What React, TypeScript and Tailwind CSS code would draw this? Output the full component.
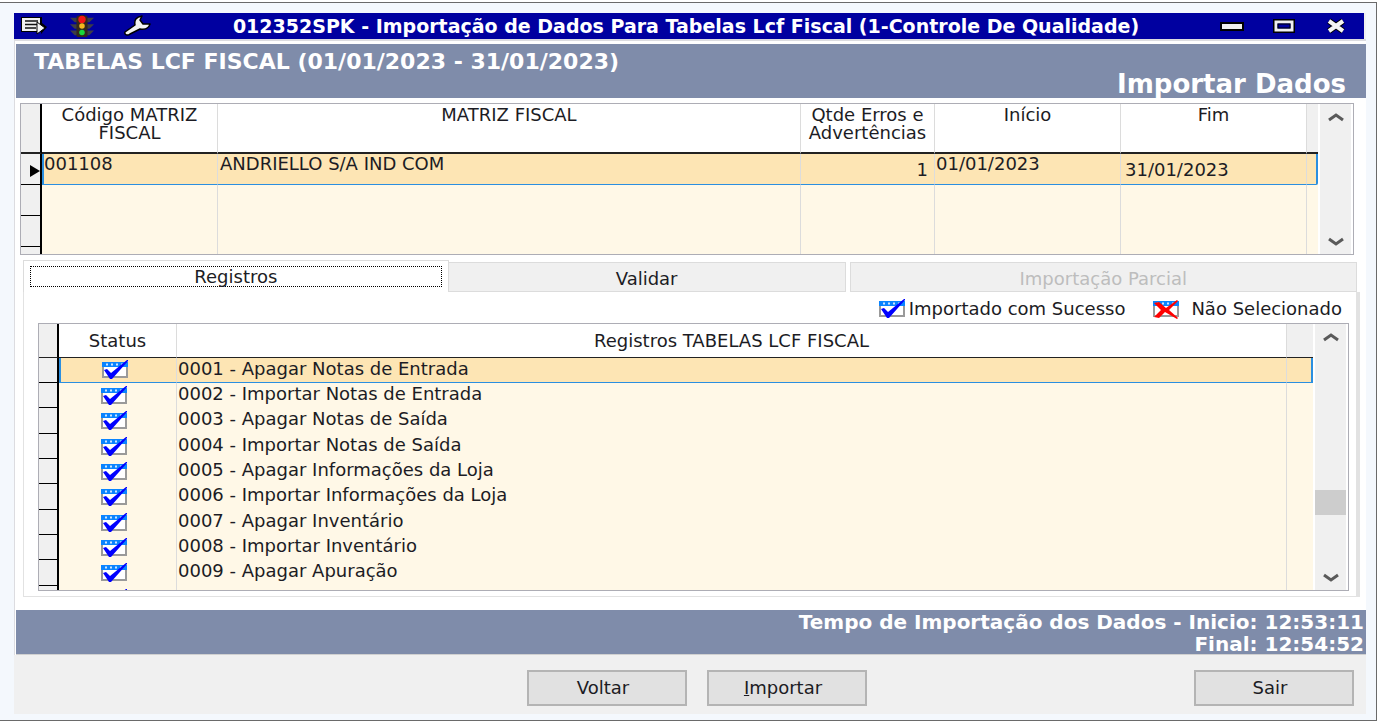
import { ReactNode, useState } from "react";

const registros = [
  "0001 - Apagar Notas de Entrada",
  "0002 - Importar Notas de Entrada",
  "0003 - Apagar Notas de Saída",
  "0004 - Importar Notas de Saída",
  "0005 - Apagar Informações da Loja",
  "0006 - Importar Informações da Loja",
  "0007 - Apagar Inventário",
  "0008 - Importar Inventário",
  "0009 - Apagar Apuração",
  "",
];

const CalendarBox = ({ children }: { children: ReactNode }) => (
  <svg className="block h-5 w-[26px] shrink-0" viewBox="0 0 26 20">
    <rect x="1" y="3" width="24" height="14" fill="#fff" stroke="#9a9a9a" strokeWidth="2" />
    <rect x="0" y="2" width="26" height="5" fill="#0a84ff" />
    <path d="M4 4.5h18" stroke="#cfe6ff" strokeWidth="2" strokeDasharray="2 3" />
    {children}
  </svg>
);

const CheckIcon = () => (
  <CalendarBox>
    <path d="M2 10l3-1 4 4L25 0h1v1L10 19H8z" fill="#0000ff" />
  </CalendarBox>
);

const CrossIcon = () => (
  <CalendarBox>
    <path d="M1 4l5-1 7 6 11-8 1 1-9 9 9 8-1 1-12-7-6 6-5-1 7-7z" fill="#ff0000" />
  </CalendarBox>
);

const MenuIcon = () => (
  <svg className="block h-7 w-7" viewBox="0 0 28 28">
    <path d="M1 5h21v6l5 4-6 7v-2H1z" fill="#000" />
    <path d="M2 6h18v13H2z" fill="#f0f0f0" />
    <path d="M5 9h13M5 12.5h13M5 16h11" stroke="#111" strokeWidth="1.5" />
    <path d="M17 10l8 6-8 6z" fill="#f5f5f5" stroke="#000" />
  </svg>
);

const TrafficIcon = () => (
  <svg className="block h-6 w-7" viewBox="0 0 28 26">
    <path d="M1 4h26l-5 5H6zM1 11h26l-5 5H6zM1 18h26l-5 5H6z" fill="#3d3d46" />
    <rect x="8" y="2" width="12" height="23" rx="2" fill="#33281c" />
    <rect x="11" y="1" width="6" height="3" fill="#222" />
    <circle cx="14" cy="6" r="4" fill="#f01414" />
    <circle cx="14" cy="13" r="3" fill="#f5b81e" />
    <circle cx="14" cy="20" r="3" fill="#18d83c" />
  </svg>
);

const WrenchIcon = () => (
  <svg className="block h-7 w-7" viewBox="0 0 28 28">
    <path
      d="M1 20L11 13C10 8 12 5 18 4L16 8L19 12L26 12C25 16 21 18 16 17L6 22C4 24 0 23 1 20Z"
      fill="#f2f2f2"
      stroke="#000"
      strokeWidth="1.5"
      strokeLinejoin="round"
    />
  </svg>
);

const Chevron = ({ down }: { down?: boolean }) => (
  <svg className="block h-[10px] w-4" viewBox="0 0 16 10">
    <path d={down ? "M1 2l7 5 7-5" : "M1 8l7-5 7 5"} fill="none" stroke="#5a5a5a" strokeWidth="3" />
  </svg>
);

const ScrollBar = ({ thumb }: { thumb?: boolean }) => (
  <div className="flex w-[35px] shrink-0 flex-col justify-between border-x-2 border-white bg-[#f0f0f0]">
    <button aria-label="Rolar para cima" className="flex h-[26px] items-center justify-center">
      <Chevron />
    </button>
    {thumb && (
      <div className="flex flex-1 flex-col justify-end pb-[51px]">
        <div className="h-[25px] bg-[#cdcdcd]" />
      </div>
    )}
    <button aria-label="Rolar para baixo" className="flex h-6 items-center justify-center">
      <Chevron down />
    </button>
  </div>
);

const App = () => {
  const [tab, setTab] = useState("registros");

  return (
    <div className="bg-white pt-[2px] pr-1 font-['DejaVu_Sans',sans-serif] text-[18px] leading-[18px] text-[#1c1c24]">
      <div className="border border-l-0 border-[#6a6a6a] bg-[#f4f8fd] pt-[10px] pr-[10px] pb-[6px] pl-[14px]">
        <div className="bg-[#f0f0f0]">
          {/* Title bar */}
          <header className="mr-[2px] flex h-[26px] items-center bg-[#0000a0] pr-4 pl-[6px] text-white">
            <button aria-label="Menu">
              <MenuIcon />
            </button>
            <button aria-label="Semáforo" className="ml-5">
              <TrafficIcon />
            </button>
            <button aria-label="Ferramentas" className="ml-7">
              <WrenchIcon />
            </button>
            <h1 className="flex-1 text-center text-[19px] font-bold whitespace-nowrap">
              012352SPK - Importação de Dados Para Tabelas Lcf Fiscal (1-Controle De Qualidade)
            </h1>
            <div className="flex items-center gap-7">
              <button aria-label="Minimizar">
                <svg className="block h-4 w-6" viewBox="0 0 24 16">
                  <rect x="1" y="5" width="22" height="7" fill="#f0f0f0" stroke="#000" strokeWidth="2" />
                </svg>
              </button>
              <button aria-label="Maximizar">
                <svg className="block h-4 w-6" viewBox="0 0 24 16">
                  <rect x="1" y="1" width="22" height="14" fill="#000" />
                  <rect x="4" y="4" width="16" height="8" fill="#0000a0" stroke="#f0f0f0" strokeWidth="3" />
                  <rect x="6" y="6" width="12" height="4" fill="none" stroke="#000" />
                </svg>
              </button>
              <button aria-label="Fechar">
                <svg className="block h-4 w-6" viewBox="0 0 24 16">
                  <path d="M5 3l14 10M19 3L5 13" stroke="#000" strokeWidth="6" />
                  <path d="M5 3l14 10M19 3L5 13" stroke="#f5f5f5" strokeWidth="4" />
                </svg>
              </button>
            </div>
          </header>

          <main className="border-t-2 border-l border-[#dcdce0] bg-white pt-[3px] pl-px">
            <div className="h-[54px] bg-[#7f8caa] pr-5 pl-[18px] font-bold text-white">
              <h2 className="pt-2 text-[22px] leading-5">TABELAS LCF FISCAL (01/01/2023 - 31/01/2023)</h2>
              <p className="text-right text-[26px] leading-6">Importar Dados</p>
            </div>

            {/* Matriz grid */}
            <div className="mt-[5px] mr-3 ml-1 flex h-[152px] overflow-hidden border border-[#adadb5]">
              <div className="flex-1 bg-[#fff8e7]">
                <table className="w-full table-fixed border-separate border-spacing-0">
                  <colgroup>
                    <col className="w-[21px]" />
                    <col className="w-44" />
                    <col />
                    <col className="w-[134px]" />
                    <col className="w-[186px]" />
                    <col className="w-[186px]" />
                    <col className="w-[11px]" />
                  </colgroup>
                  <thead>
                    <tr className="h-[50px] bg-white *:border-r *:border-b-2 *:border-r-[#dcdcdc] *:border-b-[#222] *:p-0 *:pt-[2px] *:align-top *:font-normal">
                      <td className="border-r-2! border-r-black! bg-[#f0f0f0]" />
                      <th className="px-2!">Código MATRIZ FISCAL</th>
                      <th>MATRIZ FISCAL</th>
                      <th>Qtde Erros e Advertências</th>
                      <th>Início</th>
                      <th>Fim</th>
                      <td className="border-r-0! bg-[#f0f0f0]" />
                    </tr>
                  </thead>
                  <tbody>
                    <tr className="h-[31px] bg-[#fde5b4] *:border-r *:border-b *:border-r-[#dcdcdc] *:border-b-[#2b8fe0] *:p-0 *:pt-px *:align-top">
                      <td className="border-r-2! border-r-black! border-b-black! bg-[#f0f0f0] align-bottom!">
                        <svg className="mb-[7px] ml-2 block h-3 w-[11px]" viewBox="0 0 11 12">
                          <path d="M1 0l10 6-10 6z" fill="#000" />
                        </svg>
                      </td>
                      <td className="border-l-2 border-l-[#2b8fe0]">001108</td>
                      <td className="pl-[2px]!">ANDRIELLO S/A IND COM</td>
                      <td className="pt-[7px]! pr-[6px]! text-right">1</td>
                      <td className="pl-px!">01/01/2023</td>
                      <td className="pt-[7px]! pl-1!">31/01/2023</td>
                      <td className="rounded-br-xs border-r-2! border-r-[#2b8fe0]!" />
                    </tr>
                    {[1, 2, 3].map((row) => (
                      <tr key={row} className="h-[31px] *:border-r *:border-[#dcdcdc]">
                        <td className="border-r-2! border-b border-black! bg-[#f0f0f0]" />
                        <td />
                        <td />
                        <td />
                        <td />
                        <td />
                        <td className="border-r-0!" />
                      </tr>
                    ))}
                  </tbody>
                </table>
              </div>
              <ScrollBar />
            </div>

            {/* Tabs */}
            <div role="tablist" className="mt-[5px] mr-[9px] ml-[7px] flex h-8 items-end">
              <button
                role="tab"
                aria-selected={tab === "registros"}
                onClick={() => setTab("registros")}
                className="h-8 flex-425 border border-b-0 border-[#dcdcdc]"
              >
                <span className="mx-[6px] mb-px block h-[21px] border border-dotted border-black leading-5">
                  Registros
                </span>
              </button>
              <button
                role="tab"
                aria-selected={tab === "validar"}
                onClick={() => setTab("validar")}
                className="mr-1 h-[30px] flex-397 border border-l-0 border-[#dcdcdc] bg-[#f0f0f0] pt-1"
              >
                Validar
              </button>
              <button
                role="tab"
                aria-selected={false}
                disabled
                className="h-[30px] flex-507 border border-[#dcdcdc] bg-[#f0f0f0] pt-1 text-[#bdbdbd]"
              >
                Importação Parcial
              </button>
            </div>

            <div className="mr-[6px] ml-[7px] border border-t-0 border-r-4 border-[#e2e2e2] pr-[7px] pb-[5px] pl-[14px]">
              <div className="flex h-[31px] items-center justify-end pt-[2px] pr-[7px]">
                <CheckIcon />
                <span className="ml-1">Importado com Sucesso</span>
                <span className="ml-7 flex">
                  <CrossIcon />
                </span>
                <span className="ml-3">Não Selecionado</span>
              </div>

              {/* Registros grid */}
              <div className="flex h-[268px] overflow-hidden border border-[#adadb5]">
                <div className="flex-1 bg-[#fff8e7]">
                  <table className="w-full table-fixed border-separate border-spacing-0">
                    <colgroup>
                      <col className="w-5" />
                      <col className="w-[118px]" />
                      <col />
                      <col className="w-[26px]" />
                    </colgroup>
                    <thead>
                      <tr className="h-[34px] bg-white *:border-r *:border-b *:border-r-[#dcdcdc] *:border-b-[#222] *:p-0 *:font-normal">
                        <td className="border-r-2! border-r-black! bg-[#f0f0f0]" />
                        <th>Status</th>
                        <th>Registros TABELAS LCF FISCAL</th>
                        <td className="border-r-0! bg-[#f0f0f0]" />
                      </tr>
                    </thead>
                    <tbody>
                      {registros.map((registro, i) => {
                        const selected = i === 0;
                        const cell = selected ? "border-b border-b-[#2b8fe0] bg-[#fde5b4] p-0" : "p-0";
                        return (
                          <tr key={i} className={i % 3 === 2 ? "h-[26px]" : "h-[25px]"}>
                            <td className="border-r-2 border-b border-black bg-[#f0f0f0] p-0" />
                            <td
                              className={`${cell} border-r border-r-[#dcdcdc] ${selected ? "border-l-2 border-l-[#2b8fe0]" : ""}`}
                            >
                              <span className="flex h-5 justify-center pr-2">
                                <CheckIcon />
                              </span>
                            </td>
                            <td className={`${cell} border-r border-r-[#dcdcdc] pt-[2px] pl-px align-top`}>{registro}</td>
                            <td className={`${cell} ${selected ? "border-r-2 border-r-[#2b8fe0]" : ""}`} />
                          </tr>
                        );
                      })}
                    </tbody>
                  </table>
                </div>
                <ScrollBar thumb />
              </div>
            </div>

            <div className="mt-[13px] h-[45px] border-b border-[#d0d0d0] bg-[#7f8caa] pt-px pr-[2px] text-right text-[20px] leading-[22px] font-bold text-white">
              <p>Tempo de Importação dos Dados - Inicio: 12:53:11</p>
              <p>Final: 12:54:52</p>
            </div>
          </main>

          <footer className="flex gap-5 pt-[15px] pr-3 pb-2 pl-[513px] *:h-9 *:w-40 *:border-2 *:border-[#b4b4b4] *:bg-[#e1e1e1] *:pr-2">
            <button>Voltar</button>
            <button>
              <u>I</u>mportar
            </button>
            <button className="ml-auto">Sair</button>
          </footer>
        </div>
      </div>
    </div>
  );
};

export default App;
